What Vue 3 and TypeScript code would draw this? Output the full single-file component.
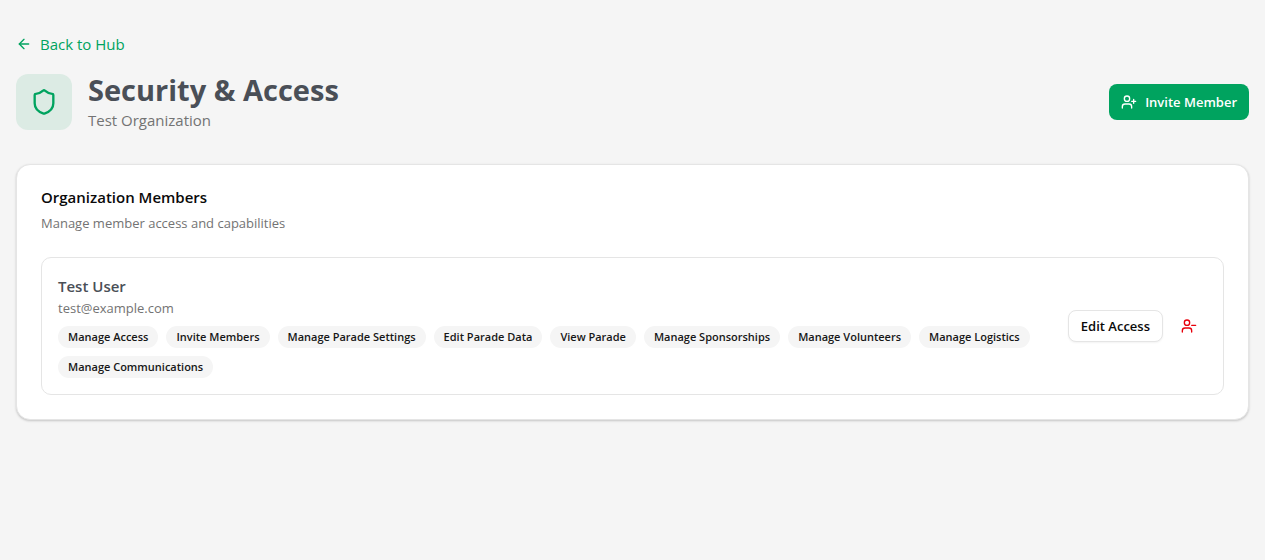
<script setup lang="ts">
interface Member {
  name: string
  email: string
  capabilities: string[]
}

const members: Member[] = [
  {
    name: 'Test User',
    email: 'test@example.com',
    capabilities: [
      'Manage Access',
      'Invite Members',
      'Manage Parade Settings',
      'Edit Parade Data',
      'View Parade',
      'Manage Sponsorships',
      'Manage Volunteers',
      'Manage Logistics',
      'Manage Communications',
    ],
  },
]
</script>

<template>
  <main class="page">
    <a class="back" href="#">
      <svg class="icon" viewBox="0 0 24 24" aria-hidden="true">
        <path d="m12 19-7-7 7-7" />
        <path d="M19 12H5" />
      </svg>
      Back to Hub
    </a>

    <header class="header">
      <div class="badge">
        <svg class="icon icon-large" viewBox="0 0 24 24" aria-hidden="true">
          <path
            d="M20 13c0 5-3.5 7.500-7.660 8.950a1 1 0 0 1-.67-.01C7.500 20.500 4 18 4 13V6a1 1 0 0 1 1-1c2 0 4.500-1.200 6.240-2.720a1.170 1.170 0 0 1 1.520 0C14.510 3.810 17 5 19 5a1 1 0 0 1 1 1z"
          />
        </svg>
      </div>
      <div class="heading">
        <h1>Security &amp; Access</h1>
        <p>Test Organization</p>
      </div>
      <button class="button primary" type="button">
        <svg class="icon" viewBox="0 0 24 24" aria-hidden="true">
          <path d="M16 21v-2a4 4 0 0 0-4-4H6a4 4 0 0 0-4 4v2" />
          <circle cx="9" cy="7" r="4" />
          <path d="M19 8v6M22 11h-6" />
        </svg>
        Invite Member
      </button>
    </header>

    <section class="card">
      <h2>Organization Members</h2>
      <p class="description">Manage member access and capabilities</p>

      <article v-for="member in members" :key="member.email" class="member">
        <div class="details">
          <h3>{{ member.name }}</h3>
          <p class="email">{{ member.email }}</p>
          <ul class="chips">
            <li v-for="capability in member.capabilities" :key="capability">{{ capability }}</li>
          </ul>
        </div>
        <div class="actions">
          <button class="button outline" type="button">Edit Access</button>
          <button class="button remove" type="button" aria-label="Remove member">
            <svg class="icon" viewBox="0 0 24 24" aria-hidden="true">
              <path d="M16 21v-2a4 4 0 0 0-4-4H6a4 4 0 0 0-4 4v2" />
              <circle cx="9" cy="7" r="4" />
              <path d="M22 11h-6" />
            </svg>
          </button>
        </div>
      </article>
    </section>
  </main>
</template>

<style>
html {
  background: #ffffff;
}

body {
  margin: 0;
}
</style>

<style scoped>
.page {
  box-sizing: border-box;
  min-height: 100vh;
  margin-right: 15px;
  padding: 32px 16px;
  background: #f5f5f5;
  color: #0a0a0a;
  font-family: "Segoe UI", "Open Sans", "Noto Sans", sans-serif;
  font-size: 15px;
  line-height: 24px;
}

h1,
h2,
h3,
p,
ul {
  margin: 0;
  padding: 0;
}

.icon {
  width: 16px;
  height: 16px;
  flex: none;
  fill: none;
  stroke: currentColor;
  stroke-width: 2;
  stroke-linecap: round;
  stroke-linejoin: round;
}

.icon-large {
  width: 28px;
  height: 28px;
}

.back {
  display: flex;
  align-items: center;
  gap: 8px;
  width: fit-content;
  color: #00a35f;
  text-decoration: none;
}

.header {
  display: flex;
  align-items: center;
  gap: 16px;
  margin: 16px 0 32px;
}

.badge {
  display: grid;
  place-items: center;
  width: 56px;
  height: 56px;
  border-radius: 12px;
  background: #dcebe4;
  color: #00a35f;
}

.heading {
  flex: 1;
  color: #737373;
}

h1 {
  color: #4a4f57;
  font-size: 29px;
  font-weight: 700;
  line-height: 36px;
}

.button {
  display: inline-flex;
  align-items: center;
  justify-content: center;
  gap: 8px;
  height: 32px;
  padding: 0 12px;
  border: 0;
  border-radius: 8px;
  background: none;
  color: inherit;
  font: inherit;
  font-size: 13px;
  font-weight: 600;
  white-space: nowrap;
}

.primary {
  height: 36px;
  background: #00a35f;
  color: #ffffff;
}

.outline {
  border: 1px solid #e5e5e5;
  background: #ffffff;
  box-shadow: 0 1px 2px rgb(0 0 0 / 5%);
}

.remove {
  padding: 0 10px;
  color: #e7000b;
}

.card {
  padding: 20px 24px 24px;
  border: 1px solid #e5e5e5;
  border-radius: 14px;
  background: #ffffff;
  box-shadow: 0 1px 3px rgb(0 0 0 / 10%), 0 1px 2px rgb(0 0 0 / 10%);
}

h2,
h3 {
  font-size: 15px;
  font-weight: 600;
  line-height: 24px;
}

h3 {
  color: #4a4f57;
}

.description,
.email {
  color: #737373;
  font-size: 13px;
  line-height: 20px;
}

.description {
  margin: 4px 0 24px;
}

.member {
  display: flex;
  align-items: center;
  gap: 16px;
  padding: 16px;
  border: 1px solid #e5e5e5;
  border-radius: 10px;
}

.details {
  flex: 1;
}

.chips {
  display: flex;
  flex-wrap: wrap;
  gap: 8px;
  margin-top: 8px;
  list-style: none;
}

.chips li {
  padding: 3px 10px;
  border-radius: 11px;
  background: #f5f5f5;
  color: #171717;
  font-size: 11px;
  font-weight: 600;
  line-height: 16px;
}

.actions {
  display: flex;
  gap: 8px;
}
</style>
